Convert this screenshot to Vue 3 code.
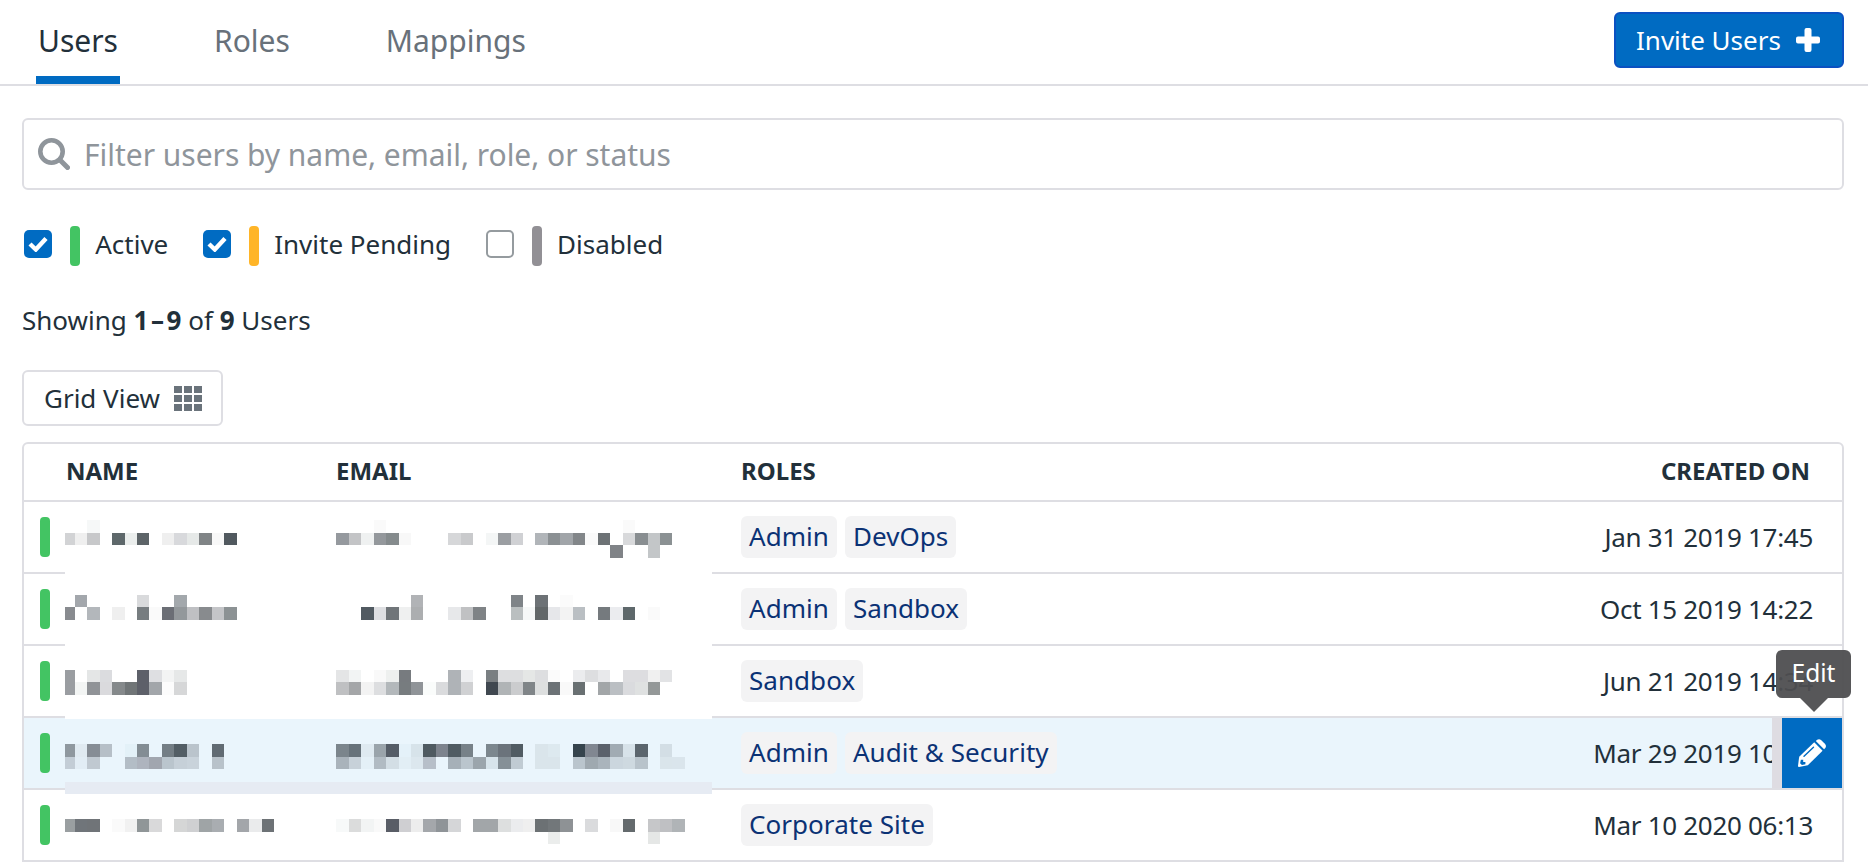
<script setup>
const tabs = ['Users', 'Roles', 'Mappings']

const filters = [
  { label: 'Active', tone: 'green', on: true },
  { label: 'Invite Pending', tone: 'amber', on: true },
  { label: 'Disabled', tone: 'gray', on: false },
]

const users = [
  { roles: ['Admin', 'DevOps'], created: 'Jan 31 2019 17:45' },
  { roles: ['Admin', 'Sandbox'], created: 'Oct 15 2019 14:22' },
  { roles: ['Sandbox'], created: 'Jun 21 2019 14:34' },
  { roles: ['Admin', 'Audit & Security'], created: 'Mar 29 2019 10:02', hover: true },
  { roles: ['Corporate Site'], created: 'Mar 10 2020 06:13' },
]

// Pixelated name and email values: mosaic line -> "column:colour" entries
const mosaic = {
  0: '7:f6f8f8 30:fafafa 50:fafafa',
  1: '5:d2d3d5 6:efefef 7:c7c8ca 9:5e686b 10:ebeeed 11:5d6468 13:efefef 14:d8d9dc 15:e6e9e8 16:808486 17:f8f8f8 18:51595f 27:95999e 28:c3c4c6 29:eff1f1 30:94989c 31:858b8d 32:f8f8f8 36:d6d7d9 37:c9cacc 39:f4f6f6 40:9b9ea2 41:d0d1d4 43:b1b5b9 44:8b9093 45:a1a5a9 46:828689 47:fafafa 48:6d7275 50:d8d9db 51:898e91 52:c3c6c8 53:8b9193',
  2: '49:808387 52:c3c6c8',
  6: '6:a3a7ac 11:d9dadc 14:a3a8ac 33:b1b3b6 41:7f8488 43:6d7276 45:fbfbfb',
  7: '5:888b8f 7:b3b7bb 9:efefef 11:777d80 12:fafafa 13:6b6e75 14:93989b 15:bfc0c3 16:888b8e 17:c4c5c8 18:8c9294 29:515a61 30:dedfe2 31:707579 32:eff0f0 33:acaeb0 36:e7e8ea 37:c0c1c3 38:7f8386 41:babfc0 42:f6f8f8 43:626769 44:e6e7ea 45:f3f3f3 46:babfc3 48:757a7e 49:ebecef 50:5e686b 52:fafafa',
  12: '5:9a9da1 7:e4e6e6 8:dbdcdf 11:5d6069 12:dedfe2 13:f3f4f4 14:e6e8e8 27:e4e5e6 28:f2f4f4 30:f9f9f9 31:eef0ef 32:777b7f 36:afb3b7 37:eeeff1 39:7a7f82 40:dddee0 41:dddee0 42:e5e7e6 43:dddee0 44:fbfbfb 46:ebecee 47:dddee0 48:e8e9eb 50:dddde0 51:dddde0 52:f0f0f0 53:e2e3e5',
  13: '5:9a9da1 6:f3f5f4 7:909397 8:dadadd 9:85898b 10:707577 11:5d6069 12:a2a6aa 13:fcfcfc 14:d6d7d8 27:bfc0c2 28:a4a6a8 29:f3f3f3 30:dddee0 31:b3b8bb 32:777c7f 33:909498 34:fafcfb 35:dadbdd 36:afb3b7 37:d0d1d3 39:404850 40:b0b4b6 41:cbccce 42:808588 43:dddfdf 44:6c7276 45:f9f9f9 46:697072 48:a2a6a8 49:bbbfc3 50:dadbde 51:dfe1e1 52:949898',
  18: '5:8f989f 6:e0eaf1 7:868d95 8:b6bfc7 10:e3f1f8 11:838d94 13:747e85 14:535e65 15:bac4cc 17:616b73 27:7b858c 28:67727a 29:dfeaf1 30:9aa4ab 31:555d67 32:e4f1f9 33:d7e3ea 34:4f5a61 35:7d838d 36:505b62 37:778188 39:7c878e 40:6b737b 41:515c63 43:dae5eb 44:dde9ef 46:36444d 47:818791 48:5b616b 49:a1abb3 50:d7e2e9 51:5b656d 53:d3dee5',
  19: '5:c3cdd6 6:e2edf5 7:c0c9d1 10:b3bdc6 11:aeb4be 12:a1a6af 13:bac5cd 14:c6d0d8 15:c9d3db 17:b8c2ca 27:a9b3bb 28:c7d1d9 29:e4f0f7 30:b1bbc3 31:d3dee5 32:e2eef5 33:dce7ee 34:b7bfc9 36:a6b0b8 37:bac5cd 38:9ba5ac 39:d7e4eb 40:859097 41:c0cbd3 43:dae5eb 44:dae5eb 46:bac5cd 47:9fa9b0 48:aab4bc 49:cbd6de 50:ced9e0 51:b8c3cb 53:dae5eb 54:dae5ec',
  24: '5:9a9fa1 6:70757a 7:707478 9:fafafa 10:f1f1f1 11:909698 12:d9d9da 14:d5d6d6 15:cfd0d2 16:9fa4a6 17:a9adb1 19:a3a6aa 20:eaebec 21:6d7276 27:f7f9f9 28:dbdcdc 29:f2f4f4 30:f9f9f9 31:595d66 32:cfcfd2 33:ededed 34:a4a7ab 35:8f9498 36:d5d6d8 38:a2a6a9 39:a2a6a9 40:dddfdf 41:ebecee 42:efefef 43:6c7174 44:72777a 45:8e9295 47:dadbdd 49:f8f8f8 50:646a6d 52:c6c7c9 53:bfc0c3 54:b0b4b7',
  25: '44:ebedec 52:e5e7e6',
}

const PITCH = 1868 / 150
const edgeX = (k) => Math.max(65, Math.round(k * PITCH)) - 65
const edgeY = (j) => Math.round(520.3 + j * PITCH) - 520
const blocks = Object.entries(mosaic).flatMap(([line, cells]) =>
  cells.split(' ').map((cell) => {
    const [col, hex] = cell.split(':')
    const j = Number(line)
    const k = Number(col)
    return {
      x: edgeX(k),
      y: edgeY(j),
      w: edgeX(k + 1) - edgeX(k),
      h: edgeY(j + 1) - edgeY(j),
      fill: '#' + hex,
    }
  })
)
</script>

<template>
  <div class="page">
    <header class="topbar">
      <nav class="tabs">
        <a v-for="(t, i) in tabs" :key="t" class="tab" :class="{ current: i === 0 }">{{ t }}</a>
      </nav>
      <button class="invite">
        <span>Invite Users</span>
        <svg width="24" height="24" viewBox="0 0 24 24"><path d="M10.500 0h3q2 0 2 2v6.500H22q2 0 2 2v3q0 2-2 2h-6.500V22q0 2-2 2h-3q-2 0-2-2v-6.500H2q-2 0-2-2v-3q0-2 2-2h6.500V2q0-2 2-2z" fill="#fff" /></svg>
      </button>
    </header>

    <main class="content">
      <div class="search">
        <svg width="32" height="32" viewBox="0 0 32 32" fill="none" stroke="#8f959b">
          <circle cx="13.500" cy="13.500" r="11.200" stroke-width="4.600" />
          <path d="M22 22l7.500 7.500" stroke-width="5" stroke-linecap="round" />
        </svg>
        <span>Filter users by name, email, role, or status</span>
      </div>

      <div class="filters">
        <label v-for="f in filters" :key="f.label" class="filter">
          <span class="box" :class="{ on: f.on }">
            <svg v-if="f.on" width="20" height="16" viewBox="0 0 20 16"><path d="M2 8l5.800 5.500L18 2.500" fill="none" stroke="#fff" stroke-width="4.400" /></svg>
          </span>
          <span class="bar" :class="f.tone"></span>
          <span class="filter-label">{{ f.label }}</span>
        </label>
      </div>

      <p class="count">Showing <b>1<i>–</i>9</b> of <b>9</b> Users</p>

      <button class="view">
        <span>Grid View</span>
        <svg width="28" height="25" viewBox="0 0 28 25" fill="#6a737b">
          <template v-for="r in 3" :key="r">
            <rect v-for="c in 3" :key="c" :x="(c - 1) * 10" :y="(r - 1) * 9" width="8" height="7" />
          </template>
        </svg>
      </button>

      <section class="table">
        <div class="row head">
          <span></span><span>NAME</span><span>EMAIL</span><span>ROLES</span><span class="right">CREATED ON</span>
        </div>
        <div v-for="u in users" :key="u.created" class="row" :class="{ hover: u.hover }">
          <span class="bar green"></span>
          <span></span>
          <span></span>
          <span class="chips"><span v-for="r in u.roles" :key="r" class="chip">{{ r }}</span></span>
          <span class="date">{{ u.created }}</span>
          <div v-if="u.hover" class="edit">
            <svg width="28" height="28" viewBox="0 0 28 28">
              <path d="M1.200 17.800L16.200 3.300L24.600 11.700L9.800 26.300L1 28Q0 28 0 27z" fill="#fff" />
              <path d="M17.800 1.900L19.200 .7Q21.300-.6 23.300 1.200L26.900 4.700Q28.800 6.800 27.300 8.900L26.100 10.200z" fill="#fff" />
              <path d="M6 17.200L15.500 8.200" stroke="#006bc2" stroke-width="1.400" stroke-linecap="round" />
              <path d="M2.900 20.700L2.100 24.200L3.900 25.900L7.400 25.200V23H5.200V20.700z" fill="#006bc2" />
            </svg>
            <div class="tip">Edit</div>
          </div>
        </div>
        <svg class="redaction" width="647" height="337" viewBox="0 0 647 337" shape-rendering="crispEdges">
          <rect width="647" height="199" fill="#fff" />
          <rect y="199" width="647" height="63" fill="#eaf5fc" />
          <rect y="262" width="647" height="12" fill="#e6ebf3" />
          <rect v-for="(b, i) in blocks" :key="i" :x="b.x" :y="b.y" :width="b.w" :height="b.h" :fill="b.fill" />
        </svg>
      </section>
    </main>
  </div>
</template>

<style>
body {
  background: #fff;
}
</style>

<style scoped>
.page {
  height: 866px;
  overflow: hidden;
  background: #fff;
  color: #22303a;
  font: 26px/36px "Noto Sans", sans-serif;
}
.page * {
  box-sizing: border-box;
}
.topbar {
  display: flex;
  justify-content: space-between;
  height: 86px;
  padding: 0 24px 0 36px;
  border-bottom: 2px solid #dedee3;
}
.tabs {
  display: flex;
  gap: 92px;
}
.tab {
  height: 84px;
  padding: 0 2px;
  font-size: 30px;
  line-height: 82px;
  color: #68717a;
}
.tab.current {
  color: #22303a;
  border-bottom: 8px solid #006bc2;
}
button {
  display: flex;
  align-items: center;
  height: 56px;
  font: inherit;
  border-radius: 6px;
  white-space: nowrap;
}
.invite {
  justify-content: space-between;
  width: 230px;
  margin-top: 12px;
  padding: 0 22px 0 20px;
  color: #fff;
  background: #006bc2;
  border: 2px solid #0b51c1;
}
.content {
  padding: 32px 24px 0 22px;
}
.search {
  display: flex;
  align-items: center;
  gap: 14px;
  height: 72px;
  padding: 0 14px;
  border: 2px solid #dedee3;
  border-radius: 6px;
  font-size: 30px;
  letter-spacing: -0.03px;
  color: #8f959b;
}
.search span {
  padding-top: 2px;
}
.filters {
  display: flex;
  gap: 34.8px;
  margin-top: 36px;
  padding-left: 2px;
}
.filter {
  display: flex;
  align-items: center;
  height: 40px;
}
.filter-label {
  padding-bottom: 4px;
}
.box {
  display: flex;
  align-items: center;
  justify-content: center;
  width: 28px;
  height: 28px;
  margin-top: -4px;
  border: 2px solid #959b9f;
  border-radius: 5px;
}
.box.on {
  border: 0;
  background: #006bc2;
}
.bar {
  width: 10px;
  height: 40px;
  border-radius: 4px;
}
.filter .bar {
  margin: 0 15.2px 0 18px;
}
.green {
  background: #43c463;
}
.amber {
  background: #ffb528;
}
.gray {
  background: #929095;
}
.count {
  margin: 36px 0 0;
}
.count i {
  font-style: normal;
  margin: 0 2.6px;
}
.view {
  width: 201px;
  margin-top: 32px;
  padding: 0 0 0 20px;
  gap: 14px;
  color: #22303a;
  background: #fff;
  border: 2px solid #dedee3;
}
.table {
  position: relative;
  margin-top: 16px;
  border: 2px solid #dedee3;
  border-radius: 6px 6px 0 0;
}
.row {
  position: relative;
  display: grid;
  grid-template-columns: 26px 270px 405px 1fr auto;
  align-items: center;
  height: 72px;
  padding: 0 29px 0 16px;
  border-bottom: 2px solid #dedee3;
}
.row:nth-last-child(2) {
  height: 70px;
  border-bottom: 0;
}
.head {
  height: 58px;
  padding: 0 32px 2px 16px;
  font-size: 24px;
  font-weight: 700;
}
.row.hover {
  background: #eaf5fc;
}
.chips {
  display: flex;
  gap: 8px;
}
.chip {
  height: 42px;
  padding: 0 8px;
  line-height: 40px;
  border-radius: 6px;
  background: #f3f3f4;
  color: #0b3275;
  letter-spacing: 0.05px;
}
.date {
  padding-bottom: 1px;
  letter-spacing: -0.3px;
}
.edit {
  position: absolute;
  top: 0;
  right: 0;
  display: flex;
  align-items: center;
  justify-content: center;
  width: 70px;
  height: 70px;
  border-left: 10px solid #dedce2;
  background: #006bc2;
}
.tip {
  position: absolute;
  z-index: 2;
  top: -68px;
  left: -6px;
  width: 75px;
  height: 48px;
  border-radius: 6px;
  background: rgba(78, 78, 80, 0.95);
  color: #fff;
  font-size: 24.5px;
  line-height: 45px;
  text-align: center;
}
.tip::after {
  content: "";
  position: absolute;
  top: 48px;
  left: 24px;
  border: 14px solid transparent;
  border-top-color: rgba(78, 78, 80, 0.95);
  border-bottom: 0;
}
.redaction {
  position: absolute;
  left: 41px;
  top: 76px;
}
</style>
